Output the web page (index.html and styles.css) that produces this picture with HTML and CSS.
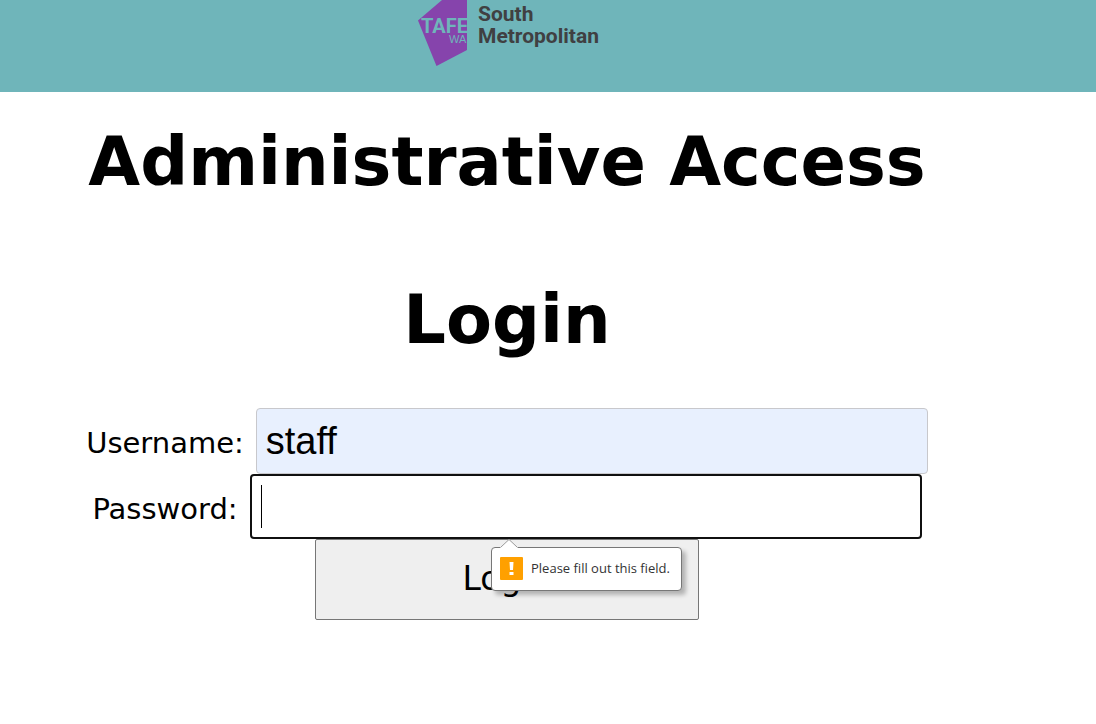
FILE: index.html
```html
<!DOCTYPE html>
<html lang="en">
<head>
<meta charset="utf-8">
<title>Administrative Access Login</title>
<link rel="stylesheet" href="styles.css">
</head>
<body>
<header class="banner">
  <svg class="logo" viewBox="0 0 180 66" width="180" height="66" role="img" aria-label="TAFE WA South Metropolitan">
    <path class="logo-shape" d="M24 0H49V50L18.500 66L0 20.500Z"/>
    <text class="logo-tafe" x="3" y="33">TAFE</text>
    <text class="logo-wa" x="31" y="43">WA</text>
    <text class="logo-name" x="60" y="21">South</text>
    <text class="logo-name" x="60" y="43">Metropolitan</text>
  </svg>
</header>
<main class="page">
  <h1 class="title">Administrative Access</h1>
  <h1 class="title">Login</h1>
  <form class="login">
    <div class="row">
      <label class="label" for="username">Username:</label>
      <input class="field filled" id="username" type="text" value="staff" required>
    </div>
    <div class="row">
      <label class="label" for="password">Password:</label>
      <input class="field focused" id="password" type="password" required>
    </div>
    <div class="action">
      <button class="submit" type="button">Login</button>
      <div class="bubble" role="alert">
        <svg class="arrow" viewBox="0 0 18 9" width="18" height="9" aria-hidden="true">
          <path d="M0 9L1 8L9 .5L17 8L18 9Z" fill="#fff"/>
          <path d="M1 8L9 .5L17 8" fill="none" stroke="#999"/>
        </svg>
        <svg class="warn" viewBox="0 0 23 23" width="23" height="23" aria-hidden="true">
          <rect width="23" height="23" rx="1" fill="#ffa000"/>
          <path d="M9.500 5H13.500L13 13H10Z M9.500 15H13.500V18H9.500Z" fill="#fff"/>
        </svg>
        <span>Please fill out this field.</span>
      </div>
    </div>
  </form>
</main>
</body>
</html>
```
FILE: styles.css
```css
* {
  box-sizing: border-box;
}

body {
  margin: 0;
  background: #fff;
  color: #000;
  font-family: Verdana, "DejaVu Sans", sans-serif;
}

.banner {
  display: flex;
  justify-content: center;
  padding: 0 80px 26px 0;
  background: #6fb5ba;
}

.logo {
  display: block;
  overflow: visible;
}

.logo-shape {
  fill: #8644ac;
}

.logo-tafe {
  fill: #6fb5ba;
  font: bold 20px Roboto, sans-serif;
}

.logo-wa {
  fill: #6fb5ba;
  font: 11px "Liberation Sans", sans-serif;
}

.logo-name {
  fill: #404042;
  font: bold 21px Roboto, sans-serif;
}

.page {
  padding: 30px 82px 0 0;
}

.title {
  margin: 0 0 78px;
  font-size: 67px;
  line-height: 80px;
  text-align: center;
}

.title + .title {
  margin-bottom: 48px;
}

.login {
  font-size: 29px;
}

.row {
  display: flex;
  align-items: center;
  justify-content: center;
  gap: 12px;
}

.label {
  padding-top: 4px;
}

.field {
  width: 672px;
  height: 66px;
  padding: 0 9px;
  border: 1px solid #c8c8cc;
  border-radius: 4px;
  color: #000;
  font: 38px "Liberation Sans", Arial, sans-serif;
}

.filled {
  background: #e8f0fe;
}

.focused {
  height: 65px;
  border: 2px solid #101010;
  background: linear-gradient(#000, #000) 9px center / 1px 43px no-repeat #fff;
  outline: none;
}

.action {
  position: relative;
  display: flex;
  justify-content: center;
}

.submit {
  width: 384px;
  height: 81px;
  padding: 0 0 3px;
  border: 1px solid #767676;
  border-radius: 2px;
  background: #efefef;
  color: #000;
  font: 33px Verdana, "DejaVu Sans", sans-serif;
}

.bubble {
  position: absolute;
  top: 8px;
  left: calc(50% - 16px);
  display: flex;
  align-items: center;
  gap: 8px;
  width: 191px;
  height: 44px;
  padding: 0 8px 2px;
  border: 1px solid #777;
  border-radius: 4px;
  background: #fff;
  box-shadow: 4px 4px 4px rgba(0, 0, 0, 0.25);
  color: #333;
  font: 13px "Open Sans", sans-serif;
  white-space: nowrap;
}

.arrow {
  position: absolute;
  top: -9px;
  left: 8px;
}

.warn {
  flex: none;
}
```
